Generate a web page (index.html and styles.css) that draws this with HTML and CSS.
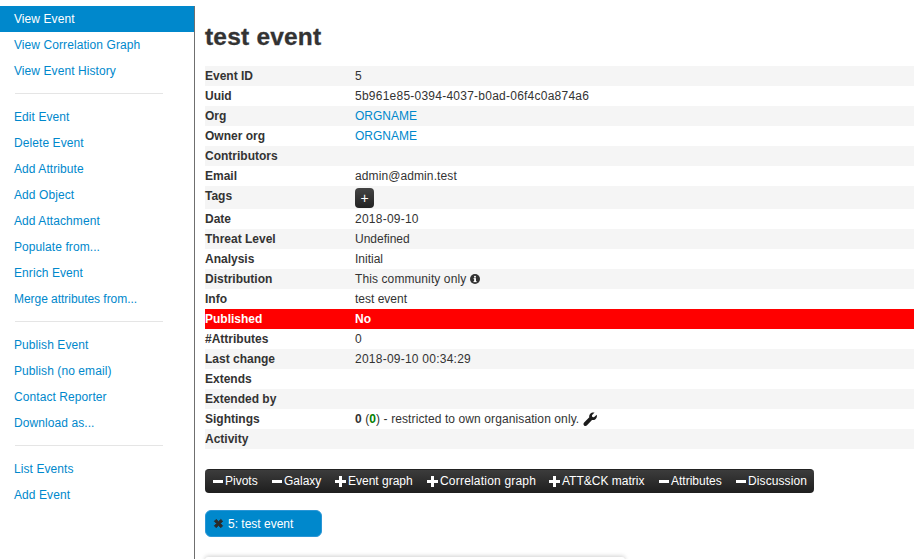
FILE: index.html
```html
<!DOCTYPE html>
<html lang="en">
<head>
<meta charset="utf-8">
<title>test event</title>
<link rel="stylesheet" href="styles.css">
</head>
<body>
<div class="page">
  <nav class="sidebar">
    <a class="side-link active">View Event</a>
    <a class="side-link">View Correlation Graph</a>
    <a class="side-link">View Event History</a>
    <div class="divider"></div>
    <a class="side-link">Edit Event</a>
    <a class="side-link">Delete Event</a>
    <a class="side-link">Add Attribute</a>
    <a class="side-link">Add Object</a>
    <a class="side-link">Add Attachment</a>
    <a class="side-link">Populate from...</a>
    <a class="side-link">Enrich Event</a>
    <a class="side-link tight">Merge attributes from...</a>
    <div class="divider"></div>
    <a class="side-link">Publish Event</a>
    <a class="side-link">Publish (no email)</a>
    <a class="side-link">Contact Reporter</a>
    <a class="side-link">Download as...</a>
    <div class="divider"></div>
    <a class="side-link">List Events</a>
    <a class="side-link">Add Event</a>
  </nav>
  <main class="content">
    <h2 class="title">test event</h2>
    <div class="meta">
      <div class="row"><b class="key">Event ID</b><span class="val">5</span></div>
      <div class="row"><b class="key">Uuid</b><span class="val num">5b961e85-0394-4037-b0ad-06f4c0a874a6</span></div>
      <div class="row"><b class="key">Org</b><a class="val link">ORGNAME</a></div>
      <div class="row"><b class="key">Owner org</b><a class="val link">ORGNAME</a></div>
      <div class="row"><b class="key">Contributors</b><span class="val"></span></div>
      <div class="row"><b class="key">Email</b><span class="val wide">admin@admin.test</span></div>
      <div class="row row-tags"><b class="key">Tags</b><span class="val"><span class="tag-btn">+</span></span></div>
      <div class="row"><b class="key">Date</b><span class="val num">2018-09-10</span></div>
      <div class="row"><b class="key">Threat Level</b><span class="val">Undefined</span></div>
      <div class="row"><b class="key">Analysis</b><span class="val">Initial</span></div>
      <div class="row"><b class="key">Distribution</b><span class="val wide">This community only
        <svg class="info" viewBox="0 0 16 16" width="10" height="10"><circle cx="8" cy="8" r="8" fill="#333"/><rect x="6.6" y="6.8" width="3" height="6" fill="#fff"/><rect x="5.6" y="11.4" width="5" height="1.6" fill="#fff"/><rect x="5.6" y="6.8" width="3" height="1.4" fill="#fff"/><circle cx="8" cy="4.4" r="1.6" fill="#fff"/></svg></span></div>
      <div class="row"><b class="key">Info</b><span class="val">test event</span></div>
      <div class="row row-red"><b class="key">Published</b><b class="val">No</b></div>
      <div class="row"><b class="key">#Attributes</b><span class="val">0</span></div>
      <div class="row"><b class="key">Last change</b><span class="val num">2018-09-10 00:34:29</span></div>
      <div class="row"><b class="key">Extends</b><span class="val"></span></div>
      <div class="row"><b class="key">Extended by</b><span class="val"></span></div>
      <div class="row"><b class="key">Sightings</b><span class="val wide"><b>0</b> (<b class="green">0</b>) - restricted to own organisation only.
        <svg class="wrench" viewBox="0 0 16 16" width="14" height="14"><path d="M15.700 3.200c.5 1.800 0 3.800-1.500 5-1.200.9-2.600 1.200-3.900.8L4.600 15.200c-.9.9-2.500 1-3.400.1-.9-.9-.9-2.500.1-3.400l5.900-5.900c-.4-1.500 0-3 1.100-4.100C9.600.6 11.500.1 13.200.7L10.200 3.700l.4 1.900 1.900.4z" fill="#1c1c1c"/></svg></span></div>
      <div class="row"><b class="key">Activity</b><span class="val"></span></div>
    </div>
    <div class="toolbar">
      <span class="tool tool-pivots"><i class="minus"></i>Pivots</span>
      <span class="tool tool-galaxy"><i class="minus"></i>Galaxy</span>
      <span class="tool tool-event"><i class="plus"></i>Event graph</span>
      <span class="tool tool-corr"><i class="plus"></i>Correlation graph</span>
      <span class="tool tool-attck"><i class="plus"></i>ATT&amp;CK matrix</span>
      <span class="tool tool-attr"><i class="minus"></i>Attributes</span>
      <span class="tool tool-disc"><i class="minus"></i>Discussion</span>
    </div>
    <div class="pill">
      <svg class="pill-x" viewBox="0 0 12 12" width="11" height="11"><path d="M1.500 3.500l2-2L6 4l2.500-2.500 2 2L8 6l2.500 2.500-2 2L6 8l-2.500 2.500-2-2L4 6z" fill="#2b2b2b" stroke="#2b2b2b" stroke-linejoin="round"/></svg>
      <span>5: test event</span>
    </div>
    <div class="panel"></div>
  </main>
</div>
</body>
</html>
```
FILE: styles.css
```css
* { box-sizing: border-box; }
html, body { margin: 0; height: 100%; overflow: hidden; }
body {
  background: #fff;
  color: #333;
  font-family: "Liberation Sans", Arial, sans-serif;
  font-size: 12px;
  line-height: 20px;
}
.page { display: flex; height: 559px; padding-top: 6px; }
.sidebar {
  flex: none;
  width: 195px;
  border-right: 1px solid #6f6f6f;
  display: flex;
  flex-direction: column;
}
.side-link {
  display: block;
  height: 26px;
  line-height: 26px;
  padding-left: 14px;
  color: #0088cc;
  letter-spacing: .08px;
}
.side-link.tight { letter-spacing: -.04px; }
.side-link.active { background: #0088cc; color: #fff; }
.divider {
  flex: none;
  height: 1px;
  margin: 9px 31px 10px 15px;
  background: #e5e5e5;
}
.content { flex: 1; padding-left: 10px; min-width: 0; }
.title {
  margin: 0;
  height: 60px;
  padding-top: 13px;
  font-size: 24.500px;
  line-height: 36px;
  font-weight: 700;
  color: #333;
  letter-spacing: .2px;
  -webkit-text-stroke: .3px #333;
}
.meta { width: 709px; }
.row { display: flex; height: 20px; line-height: 20px; }
.row:nth-child(odd) { background: #f5f5f5; }
.row-tags { height: 23px; }
.row-red, .row-red:nth-child(odd) { background: #ff0000; color: #fff; }
.key { flex: none; width: 150px; font-weight: 700; }
.val { flex: 1; }
.num { letter-spacing: .24px; }
.wide { letter-spacing: .1px; }
.link { color: #0088cc; }
.green { color: #008000; }
.tag-btn {
  display: inline-block;
  width: 19px;
  height: 20px;
  margin-top: 2px;
  background: linear-gradient(#444, #222);
  border-radius: 4px;
  color: #fff;
  text-align: center;
  font-size: 14px;
  line-height: 21px;
  vertical-align: top;
}
.info { vertical-align: -1px; }
.wrench { vertical-align: -3px; }
.toolbar {
  display: flex;
  width: 609px;
  height: 24px;
  margin-top: 20px;
  background: linear-gradient(#3c3c3c, #1e1e1e);
  border-top: 1px solid #222;
  border-radius: 4px;
  color: #fff;
  line-height: 23px;
  padding-left: 8px;
  white-space: nowrap;
}
.tool { display: flex; align-items: center; }
.tool-pivots { width: 59px; }
.tool-galaxy { width: 63px; }
.tool-event { width: 92px; }
.tool-corr { width: 122px; letter-spacing: .2px; }
.tool-attck { width: 110px; }
.tool-attr { width: 77px; }
.tool-disc { letter-spacing: .1px; }
.minus { flex: none; width: 10px; height: 3px; background: #fff; margin-right: 2px; }
.plus {
  flex: none;
  width: 11px;
  height: 11px;
  margin-right: 2px;
  background:
    linear-gradient(#fff, #fff) center / 11px 3px no-repeat,
    linear-gradient(#fff, #fff) center / 3px 11px no-repeat;
}
.pill {
  display: flex;
  align-items: center;
  width: 117px;
  height: 27px;
  margin-top: 17px;
  padding-left: 7px;
  background: #0088cc;
  border: 1px solid #2a96d6;
  border-radius: 6px;
  color: #fff;
}
.pill-x { margin-right: 4px; }
.panel {
  width: 420px;
  height: 20px;
  margin-top: 20px;
  background: #fff;
  border-radius: 3px;
  box-shadow: 0 -1px 4px rgba(0,0,0,.18);
}
```
